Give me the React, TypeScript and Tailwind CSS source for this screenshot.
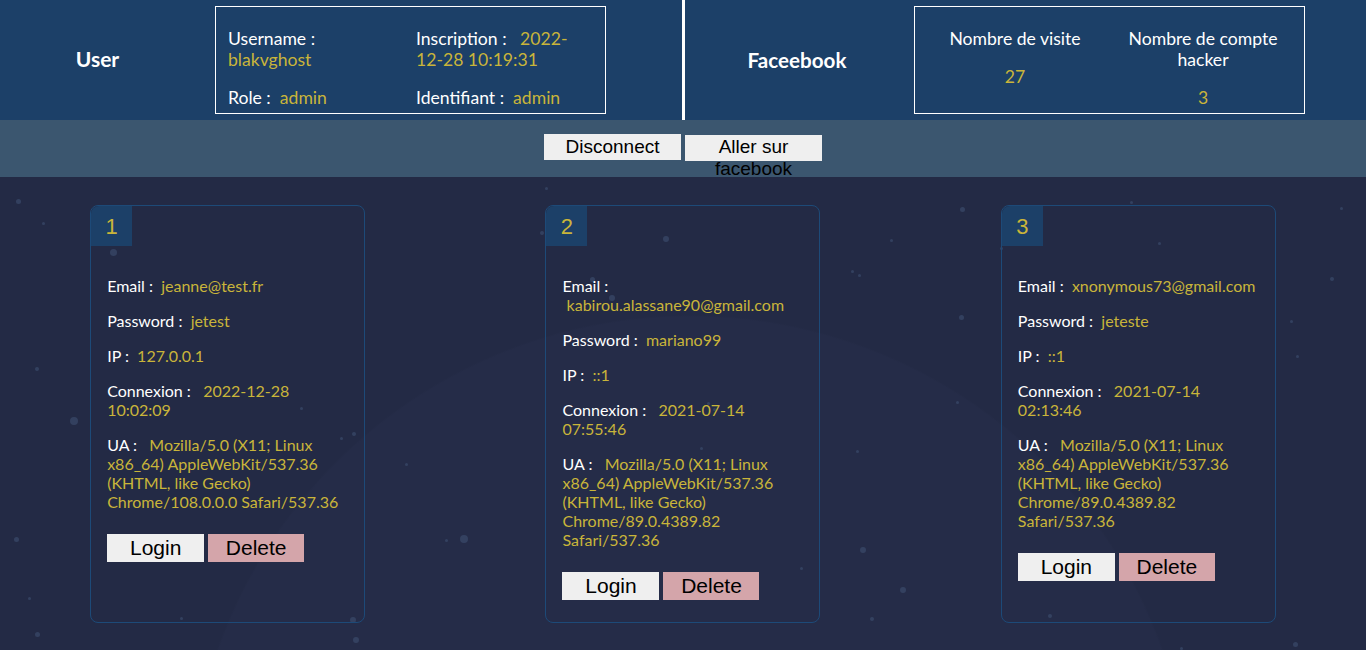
import React from "react";

const gold = "text-[#c9b53a]";

type Account = {
  id: number;
  email: string;
  password: string;
  ip: string;
  connexion: string;
  ua: string;
};

const accounts: Account[] = [
  {
    id: 1,
    email: "jeanne@test.fr",
    password: "jetest",
    ip: "127.0.0.1",
    connexion: "2022-12-28 10:02:09",
    ua: "Mozilla/5.0 (X11; Linux x86_64) AppleWebKit/537.36 (KHTML, like Gecko) Chrome/108.0.0.0 Safari/537.36",
  },
  {
    id: 2,
    email: "kabirou.alassane90@gmail.com",
    password: "mariano99",
    ip: "::1",
    connexion: "2021-07-14 07:55:46",
    ua: "Mozilla/5.0 (X11; Linux x86_64) AppleWebKit/537.36 (KHTML, like Gecko) Chrome/89.0.4389.82 Safari/537.36",
  },
  {
    id: 3,
    email: "xnonymous73@gmail.com",
    password: "jeteste",
    ip: "::1",
    connexion: "2021-07-14 02:13:46",
    ua: "Mozilla/5.0 (X11; Linux x86_64) AppleWebKit/537.36 (KHTML, like Gecko) Chrome/89.0.4389.82 Safari/537.36",
  },
];

// background particles [x, y, size]
const dots: [number, number, number][] = [
  [16, 22, 5], [42, 45, 3], [110, 72, 7], [35, 190, 4], [70, 240, 8], [14, 360, 5], [28, 420, 3],
  [300, 230, 3], [340, 260, 3], [460, 358, 8], [352, 255, 4], [405, 286, 3], [445, 362, 3],
  [545, 10, 3], [540, 54, 4], [663, 59, 6], [590, 100, 5], [609, 118, 6], [707, 225, 3], [713, 231, 3],
  [851, 93, 3], [858, 97, 3], [856, 273, 3], [890, 62, 3], [960, 30, 5], [959, 138, 5], [956, 224, 3],
  [1000, 70, 3], [1031, 110, 4], [1130, 24, 3], [1158, 65, 3], [1290, 143, 3], [1296, 178, 3],
  [1330, 100, 4], [1340, 30, 3], [1293, 465, 5], [1335, 520, 3], [1180, 470, 3], [860, 370, 6],
  [900, 410, 6], [870, 440, 4], [210, 370, 3], [180, 440, 3], [35, 455, 5], [350, 440, 6], [353, 460, 6],
  [27, 620, 5], [27, 645, 5], [1285, 610, 6], [1285, 635, 6], [900, 620, 5], [900, 645, 5], [590, 630, 5],
  [1048, 437, 4], [1150, 530, 4], [620, 480, 3], [700, 270, 3], [800, 390, 3], [480, 600, 4],
];

function Field({ label, value, gap = 2 }: { label: string; value: string; gap?: number }) {
  const pad = gap === 3 ? "\u00a0\u00a0" : "\u00a0";
  return (
    <p className="mb-4">
      <span className="text-white">{label} </span>
      <span className={gold}>{pad + value}</span>
    </p>
  );
}

function Card({ a }: { a: Account }) {
  return (
    <div className="w-[275px] rounded-lg border border-[#1d4a78] flex flex-col">
      <div className="w-[41px] h-[40px] bg-[#1c4068] rounded-tl-lg flex items-center justify-center text-[22px] text-[#c9b53a] font-['Liberation_Sans',sans-serif]">
        {a.id}
      </div>
      <div className="px-[16px] pt-[30px] pb-[22px] text-[16px] leading-[19px] font-['Lato',sans-serif]">
        <Field label="Email :" value={a.email} />
        <Field label="Password :" value={a.password} />
        <Field label="IP :" value={a.ip} />
        <Field label="Connexion :" value={a.connexion} gap={3} />
        <Field label="UA :" value={a.ua} gap={3} />
        <div className="flex gap-[4px] pt-[7px] font-['Liberation_Sans',sans-serif] text-[21px] text-black">
          <button className="w-[97px] h-[28px] bg-[#efefef] leading-[28px]">Login</button>
          <button className="w-[96px] h-[28px] bg-[#d4a5aa] leading-[28px]">Delete</button>
        </div>
      </div>
    </div>
  );
}

export default function App() {
  return (
    <div className="w-[1366px] h-[650px] overflow-hidden bg-[#232a45] font-['Lato',sans-serif]">
      {/* header */}
      <header className="h-[120px] bg-[#1c4068] flex text-[17.6px] leading-[21px]">
        <div className="w-[195px] flex items-center justify-center pb-[3px] text-white font-bold text-[21px]">User</div>
        <div className="ml-[20px] mt-[6px] w-[391px] h-[108px] border border-white pl-[12px] pt-[21px] grid grid-cols-[170px_170px] gap-x-[18px] gap-y-[17px] content-start text-white">
          <div>
            Username : <span className={gold}>blakvghost</span>
          </div>
          <div>
            Inscription : &nbsp;&nbsp;<span className={gold}>2022-12-28 10:19:31</span>
          </div>
          <div>
            Role : &nbsp;<span className={gold}>admin</span>
          </div>
          <div>
            Identifiant : &nbsp;<span className={gold}>admin</span>
          </div>
        </div>
        <div className="w-[76px]" />
        <div className="w-[3px] bg-white" />
        <div className="w-[224px] flex items-center justify-center pt-[1px] text-white font-bold text-[20.6px]">Faceebook</div>
        <div className="ml-[5px] mt-[6px] w-[391px] h-[108px] border border-white pt-[21px] pl-[5px] grid grid-cols-[190px_186px] content-start text-white text-center">
          <div className="flex flex-col gap-[17px]">
            <span>Nombre de visite</span>
            <span className={gold}>27</span>
          </div>
          <div className="flex flex-col gap-[17px]">
            <span>Nombre de compte hacker</span>
            <span className={gold}>3</span>
          </div>
        </div>
      </header>

      {/* action bar */}
      <div className="h-[57px] bg-[#3b566f] flex justify-center items-start pt-[14px] gap-[4px] font-['Liberation_Sans',sans-serif] text-[19px] leading-[22px] text-black">
        <button className="w-[137px] h-[26px] bg-[#efefef]">Disconnect</button>
        <button className="w-[137px] h-[26px] mt-[1px] bg-[#efefef] flex flex-col items-center justify-start pt-[1px] overflow-visible">
          <span>Aller sur</span>
          <span>facebook</span>
        </button>
      </div>

      {/* accounts */}
      <main className="relative h-[473px] bg-[radial-gradient(circle_at_690px_640px,#252c48_0px,#252c48_500px,#232a45_502px)]">
        {dots.map(([x, y, s], i) => (
          <span
            key={i}
            className="absolute rounded-full bg-[#3a4a6b] opacity-70"
            style={{ left: x, top: y, width: s, height: s }}
          />
        ))}
        <div className="relative grid grid-cols-3 pt-[28px] items-stretch">
          {accounts.map((a) => (
            <div key={a.id} className="flex justify-center">
              <Card a={a} />
            </div>
          ))}
        </div>
      </main>
    </div>
  );
}
